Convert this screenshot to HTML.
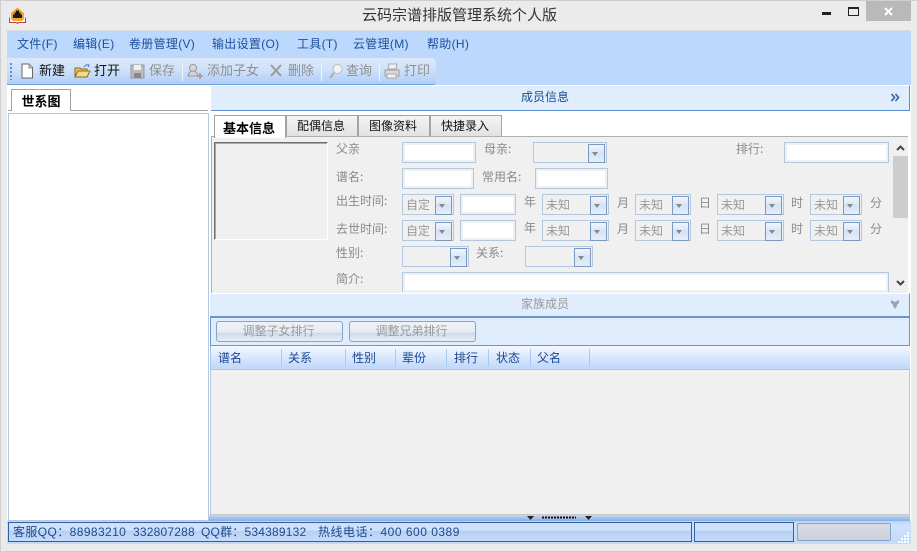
<!DOCTYPE html>
<html><head><meta charset="utf-8"><style>
html,body{margin:0;padding:0}
body{width:918px;height:552px;position:relative;overflow:hidden;background:#ebebeb;font:12px "Liberation Sans","Noto Sans CJK SC",sans-serif;color:#000}
div,span,svg{position:absolute;box-sizing:border-box;white-space:nowrap}
.m{top:36px;font-size:12px;line-height:16px;color:#1c4f9c;letter-spacing:.3px}
.t{top:62px;font-size:13px;line-height:17px;color:#111}
.g{color:#8f8f8f}
.l{font:12px/14px "WenQuanYi Zen Hei","Noto Sans CJK SC",sans-serif;color:#8a8a8a}
.i{border:1px solid #b3c7e0;background:#fff;box-shadow:inset 0 0 0 2px #f0f0f0}
.c{border:1px solid #b3c7e0;background:#f0f0f0;font:12px/19px "WenQuanYi Zen Hei","Noto Sans CJK SC",sans-serif;color:#9a9a9a;padding-left:3px}
.c b{position:absolute;right:1px;top:1px;width:15px;height:17px;border:1px solid #7b98bf;background:linear-gradient(#f2f6fd 0,#d4e3f8 50%,#e5eefb 100%)}
.c b:after{content:"";position:absolute;left:3px;top:7px;border:3px solid transparent;border-top:4px solid #888;border-bottom:0}
.tab{top:115px;height:21px;border:1px solid #a3a3a3;border-bottom:0;background:linear-gradient(#f4f4f4,#e2e2e2);text-align:center;padding-right:2px;font:12px/19px "Noto Sans CJK SC",sans-serif;color:#111}
.h{top:350px;font-size:12px;line-height:16px;color:#1a4796}
.s{top:349px;width:1px;height:17px;background:#a9c8ef}
.st{top:523px;font-size:12px;line-height:18px;color:#1f4a8c}
.b{top:321px;width:127px;height:21px;border:1px solid #8aa3c4;border-radius:3px;background:linear-gradient(#eef2f8,#e6ebf3 55%,#cdd9ea 58%,#e8eef6);text-align:center;padding-right:2px;line-height:18px;color:#999}
</style></head><body>
<div style="left:0;top:0;width:918px;height:1px;background:#cfcfcf"></div>
<div style="left:0;top:551px;width:918px;height:1px;background:#cfcfcf"></div>
<div style="left:0;top:0;width:1px;height:552px;background:#cfcfcf"></div>
<div style="left:917px;top:0;width:1px;height:552px;background:#cfcfcf"></div>

<svg style="left:9px;top:7px" width="17" height="17" viewBox="0 0 17 17"><path d="M.5 10.500v5h7l1 1 1-1h7v-5" fill="#fff" stroke="#b5414f"/><path d="M8.500 .5 15 6v6l-2 2H4l-2-2V6z" fill="#f3a428"/><path d="M7 3.500h3v2h1.500v2H13v3.500H4V7.500h1.500v-2H7z" fill="#1a1a1a"/></svg>
<div style="left:362px;top:6px;font-size:15px;line-height:20px;color:#333">云码宗谱排版管理系统个人版</div>
<div style="left:822px;top:12px;width:9px;height:3px;background:#222"></div>
<div style="left:848px;top:7px;width:11px;height:9px;border:1px solid #222;border-top-width:2px"></div>
<div style="left:866px;top:1px;width:45px;height:20px;background:#b9b9b9"></div>
<svg style="left:883px;top:6px" width="12" height="11"><path d="M2 2l7 7M9 2L2 9" stroke="#fff" stroke-width="2"/></svg>

<div style="left:7px;top:30px;width:904px;height:514px;background:#fff"></div>
<div style="left:7px;top:30px;width:904px;height:55px;background:#bcd8fd;border-top:1px solid #dcdcdc"></div>
<span class="m" style="left:17px">文件(F)</span>
<span class="m" style="left:73px">编辑(E)</span>
<span class="m" style="left:129px">卷册管理(V)</span>
<span class="m" style="left:212px">输出设置(O)</span>
<span class="m" style="left:297px">工具(T)</span>
<span class="m" style="left:353px">云管理(M)</span>
<span class="m" style="left:427px">帮助(H)</span>

<div style="left:7px;top:58px;width:429px;height:27px;border-radius:0 5px 3px 0;background:linear-gradient(#dde9fb 0,#cfe1fa 45%,#afcdf6 100%);border-bottom:1px solid #6d9ede"></div>
<div style="left:10px;top:63px;width:2px;height:17px;background:repeating-linear-gradient(#5f8fd6 0 2px,transparent 2px 4px)"></div>
<svg style="left:20px;top:63px" width="14" height="16"><path d="M2 1h7l3.500 3.500V15H2z" fill="#fff" stroke="#666"/><path d="M9 1v4h3.500" fill="#ddd" stroke="#888"/></svg>
<span class="t" style="left:39px">新建</span>
<svg style="left:74px;top:63px" width="17" height="16"><path d="M1 5h5l1 1h6v8H1z" fill="#e8c25c" stroke="#8c6a20"/><path d="M1 14l3-6h12l-3 6z" fill="#f4d98a" stroke="#8c6a20"/><path d="M10 4q2-3 5-2l-1 2" fill="none" stroke="#4a78b8"/></svg>
<span class="t" style="left:94px">打开</span>
<svg style="left:130px;top:63px" width="15" height="16"><path d="M1 2h13v13H1z" fill="#bcbcbc" stroke="#999"/><path d="M4 2h7v5H4z" fill="#efefef"/><path d="M4 10h7v5H4z" fill="#888"/></svg>
<span class="t g" style="left:149px">保存</span>
<div style="left:182px;top:63px;width:1px;height:18px;background:#eef4fd"></div>
<svg style="left:187px;top:63px" width="17" height="17"><circle cx="6" cy="5" r="3.500" fill="#d8d8d8" stroke="#999"/><path d="M1 13q1-5 5-5t5 5z" fill="#d4d4d4" stroke="#999"/><path d="M13 10v6M10 13h6" stroke="#a5a5a5" stroke-width="2"/></svg>
<span class="t g" style="left:207px">添加子女</span>
<svg style="left:269px;top:63px" width="14" height="15"><path d="M2 2l10 11M12 2L2 13" stroke="#999" stroke-width="2"/></svg>
<span class="t g" style="left:288px">删除</span>
<div style="left:321px;top:63px;width:1px;height:18px;background:#eef4fd"></div>
<svg style="left:328px;top:63px" width="15" height="17"><circle cx="9.500" cy="6" r="4.500" fill="#f2f2f2" stroke="#bbb"/><path d="M6 10l-4 5" stroke="#aaa" stroke-width="2"/></svg>
<span class="t g" style="left:346px">查询</span>
<div style="left:379px;top:63px;width:1px;height:18px;background:#eef4fd"></div>
<svg style="left:384px;top:63px" width="16" height="16"><path d="M5 1h8l-1 5H4z" fill="#f2f2f2" stroke="#aaa"/><path d="M1 7h14v6H1z" fill="#d8d8d8" stroke="#a0a0a0"/><path d="M3 11h9v4H3z" fill="#f2f2f2" stroke="#aaa"/></svg>
<span class="t g" style="left:404px">打印</span>

<!-- left panel -->
<div style="left:8px;top:110px;width:200px;height:1px;background:#a3a3a3"></div>
<div style="left:11px;top:89px;width:60px;height:22px;border:1px solid #a3a3a3;border-bottom:0;background:#fff;text-align:center;font:bold 13px/21px 'Noto Sans CJK SC',sans-serif">世系图</div>
<div style="left:8px;top:113px;width:201px;height:408px;border:1px solid #b6c8e0;background:#fff"></div>

<!-- member header -->
<div style="left:211px;top:85px;width:699px;height:26px;background:#e0edfd;border-top:1px solid #fff;border-bottom:1px solid #5b8fd0;border-right:1px solid #5b8fd0"></div>
<span style="left:521px;top:89px;font-size:12px;line-height:16px;color:#1c4f8c">成员信息</span>
<svg style="left:890px;top:93px" width="10" height="9"><path d="M1.500 1l3 3.500-3 3.500M5.500 1l3 3.500-3 3.500" fill="none" stroke="#3c64a4" stroke-width="1.700"/></svg>

<!-- tabs -->
<div style="left:210px;top:111px;width:700px;height:182px;background:#fff"></div>
<div style="left:211px;top:136px;width:697px;height:157px;background:#f0f0f0;border-top:1px solid #b0b0b0;border-left:1px solid #b0b0b0"></div>
<div style="left:214px;top:115px;width:72px;height:23px;border:1px solid #a3a3a3;border-bottom:0;background:#fff;text-align:center;padding-right:2px;font:bold 13px/23px 'Noto Sans CJK SC',sans-serif">基本信息</div>
<div class="tab" style="left:286px;width:72px">配偶信息</div>
<div class="tab" style="left:358px;width:72px">图像资料</div>
<div class="tab" style="left:430px;width:72px">快捷录入</div>

<!-- form -->
<div style="left:214px;top:142px;width:114px;height:98px;border:1px solid;border-color:#707070 #fff #fff #707070;box-shadow:inset 1px 1px 0 #a8a8a8;background:#f0f0f0"></div>
<span class="l" style="left:336px;top:142px">父亲</span>
<div class="i" style="left:402px;top:142px;width:74px;height:21px"></div>
<span class="l" style="left:484px;top:142px">母亲:</span>
<div class="c" style="left:533px;top:142px;width:74px;height:21px"><b></b></div>
<span class="l" style="left:736px;top:142px">排行:</span>
<div class="i" style="left:784px;top:142px;width:105px;height:21px"></div>

<span class="l" style="left:336px;top:170px">谱名:</span>
<div class="i" style="left:402px;top:168px;width:72px;height:21px"></div>
<span class="l" style="left:482px;top:170px">常用名:</span>
<div class="i" style="left:535px;top:168px;width:73px;height:21px"></div>

<span class="l" style="left:336px;top:194px">出生时间:</span>
<div class="c" style="left:402px;top:194px;width:52px;height:21px">自定<b></b></div>
<div class="i" style="left:460px;top:194px;width:56px;height:21px"></div>
<span class="l" style="left:524px;top:195px">年</span>
<div class="c" style="left:542px;top:194px;width:67px;height:21px">未知<b></b></div>
<span class="l" style="left:617px;top:196px">月</span>
<div class="c" style="left:635px;top:194px;width:56px;height:21px">未知<b></b></div>
<span class="l" style="left:699px;top:196px">日</span>
<div class="c" style="left:717px;top:194px;width:67px;height:21px">未知<b></b></div>
<span class="l" style="left:791px;top:196px">时</span>
<div class="c" style="left:810px;top:194px;width:52px;height:21px">未知<b></b></div>
<span class="l" style="left:870px;top:196px">分</span>

<span class="l" style="left:336px;top:222px">去世时间:</span>
<div class="c" style="left:402px;top:220px;width:52px;height:21px">自定<b></b></div>
<div class="i" style="left:460px;top:220px;width:56px;height:21px"></div>
<span class="l" style="left:524px;top:221px">年</span>
<div class="c" style="left:542px;top:220px;width:67px;height:21px">未知<b></b></div>
<span class="l" style="left:617px;top:222px">月</span>
<div class="c" style="left:635px;top:220px;width:56px;height:21px">未知<b></b></div>
<span class="l" style="left:699px;top:222px">日</span>
<div class="c" style="left:717px;top:220px;width:67px;height:21px">未知<b></b></div>
<span class="l" style="left:791px;top:222px">时</span>
<div class="c" style="left:810px;top:220px;width:52px;height:21px">未知<b></b></div>
<span class="l" style="left:870px;top:222px">分</span>

<span class="l" style="left:336px;top:246px">性别:</span>
<div class="c" style="left:402px;top:246px;width:67px;height:21px"><b></b></div>
<span class="l" style="left:476px;top:246px">关系:</span>
<div class="c" style="left:525px;top:246px;width:68px;height:21px"><b></b></div>
<span class="l" style="left:336px;top:272px">简介:</span>
<div class="i" style="left:402px;top:272px;width:487px;height:24px"></div>
<div style="left:403px;top:290px;width:485px;height:3px;background:#f0f0f0"></div>
<div style="left:402px;top:292px;width:487px;height:1px;background:#f0f0f0"></div>

<!-- scrollbar -->
<div style="left:892px;top:137px;width:16px;height:156px;background:#f0f0f0"></div>
<div style="left:893px;top:156px;width:15px;height:62px;background:#cdcdcd"></div>
<svg style="left:895px;top:144px" width="11" height="8"><path d="M2 6l3.500-3.500L9 6" fill="none" stroke="#444" stroke-width="2"/></svg>
<svg style="left:895px;top:279px" width="11" height="8"><path d="M2 2l3.500 3.500L9 2" fill="none" stroke="#444" stroke-width="2"/></svg>

<!-- family -->
<div style="left:210px;top:293px;width:700px;height:25px;background:#e0edfd;border-top:1px solid #fff;border-bottom:2px solid #6a96cc;border-right:1px solid #6a96cc"></div>
<span style="left:521px;top:296px;font-size:12px;line-height:16px;color:#999">家族成员</span>
<svg style="left:890px;top:300px" width="10" height="9"><path d="M1 0l2 1 2 1 2-1 2-1v3L7 5v1L5 9 3 6V5L1 3z" fill="#9aa4b2"/></svg>
<div style="left:210px;top:318px;width:700px;height:28px;background:#e0edfd;border-right:1px solid #6a96cc;border-left:1px solid #6a96cc;border-bottom:1px solid #6a96cc"></div>
<div class="b" style="left:216px">调整子女排行</div>
<div class="b" style="left:349px">调整兄弟排行</div>

<div style="left:210px;top:346px;width:700px;height:24px;background:linear-gradient(#f4f8ff,#c4dafa 90%);border-bottom:1px solid #a9c3e6;border-left:1px solid #a9c3e6"></div>
<span class="h" style="left:218px">谱名</span><div class="s" style="left:281px"></div>
<span class="h" style="left:288px">关系</span><div class="s" style="left:345px"></div>
<span class="h" style="left:352px">性别</span><div class="s" style="left:395px"></div>
<span class="h" style="left:402px">辈份</span><div class="s" style="left:446px"></div>
<span class="h" style="left:454px">排行</span><div class="s" style="left:488px"></div>
<span class="h" style="left:496px">状态</span><div class="s" style="left:530px"></div>
<span class="h" style="left:537px">父名</span><div class="s" style="left:589px"></div>

<div style="left:210px;top:370px;width:700px;height:145px;background:#f0f0f0;border-left:1px solid #b6c8e0;border-right:1px solid #b6c8e0;border-bottom:1px solid #c8c8c8"></div>
<div style="left:209px;top:515px;width:701px;height:7px;background:linear-gradient(#c3d9f7,#7fa6dc)"></div>
<svg style="left:526px;top:515px" width="70" height="6"><path d="M1 1h7L4.500 5zM59 1h7l-3.500 4z" fill="#222"/><path d="M16 2.500h34" stroke="#111" stroke-width="2" stroke-dasharray="2 1"/></svg>

<!-- status -->
<div style="left:7px;top:521px;width:904px;height:23px;background:linear-gradient(#bcd4f6,#cfe2fb 20%,#c2d9f8 100%)"></div>
<div style="left:8px;top:522px;width:684px;height:20px;border:1px solid #2f5fa3;background:linear-gradient(#cfe1fb 0,#cfe1fb 40%,#b4d0f6 45%,#c8dcf9 100%)"></div>
<span class="st" style="left:13px;letter-spacing:.4px">客服QQ：88983210</span>
<span class="st" style="left:133px;letter-spacing:.2px">332807288</span>
<span class="st" style="left:201px;letter-spacing:.2px">QQ群：534389132</span>
<span class="st" style="left:318px;letter-spacing:.5px">热线电话：400 600 0389</span>
<div style="left:694px;top:522px;width:100px;height:20px;border:1px solid #2f5fa3;background:linear-gradient(#cfe1fb 0,#cfe1fb 40%,#b4d0f6 45%,#c8dcf9 100%)"></div>
<div style="left:797px;top:523px;width:94px;height:18px;border:1px solid #8ba3c4;border-radius:2px;background:linear-gradient(#d9dce4,#cdd1da)"></div>
<svg style="left:898px;top:531px" width="13" height="13"><path d="M9 1h2v2H9zM6 4h2v2H6zM9 4h2v2H9zM3 7h2v2H3zM6 7h2v2H6zM9 7h2v2H9zM0 10h2v2H0zM3 10h2v2H3zM6 10h2v2H6zM9 10h2v2H9z" fill="#fff"/></svg>
</body></html>
